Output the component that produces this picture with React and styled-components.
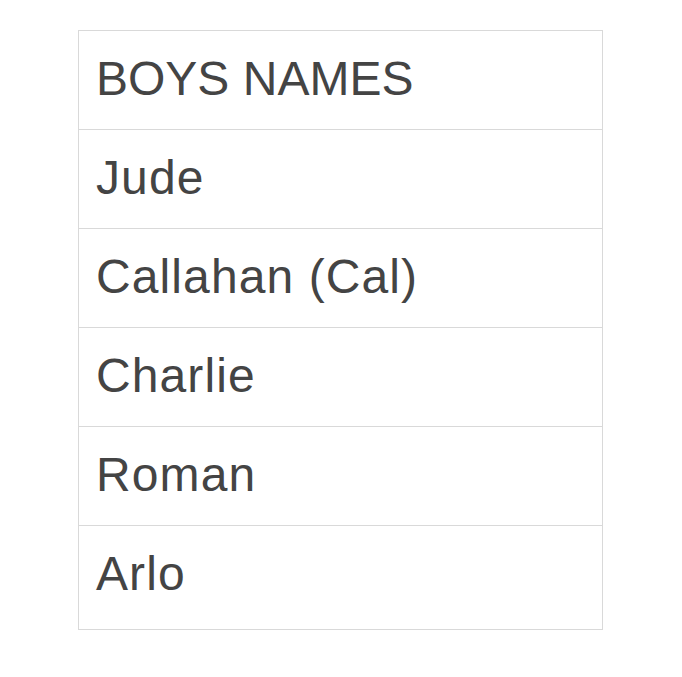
import React from "react";
import styled, { createGlobalStyle } from "styled-components";

const GlobalStyle = createGlobalStyle`
  body {
    margin: 0;
    background: #ffffff;
    font-family: "Liberation Sans", Arial, sans-serif;
  }
`;

const Page = styled.div`
  padding: 30px 0 0 78px;
`;

const Table = styled.div`
  width: 525px;
  box-sizing: border-box;
  border: 1px solid #d9d9d9;
  display: flex;
  flex-direction: column;
`;

const Row = styled.div`
  box-sizing: border-box;
  height: ${(p) => (p.$last ? 103 : 99)}px;
  padding: 20px 0 0 17px;
  border-bottom: ${(p) => (p.$last ? "none" : "1px solid #d9d9d9")};
  font-size: 48px;
  line-height: 55px;
  letter-spacing: ${(p) => (p.$head ? "0" : "1.1px")};
  color: #444444;
  white-space: nowrap;
`;

const names = ["BOYS NAMES", "Jude", "Callahan (Cal)", "Charlie", "Roman", "Arlo"];

export default function App() {
  return (
    <>
      <GlobalStyle />
      <Page>
        <Table>
          {names.map((n, i) => (
            <Row key={n} $head={i === 0} $last={i === names.length - 1}>
              {n}
            </Row>
          ))}
        </Table>
      </Page>
    </>
  );
}
